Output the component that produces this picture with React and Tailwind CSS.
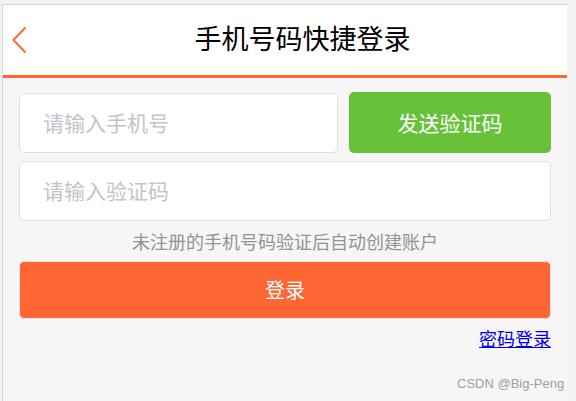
import React from 'react'

const cjk = { fontFamily: '"Noto Sans CJK SC", "Liberation Sans", sans-serif' }

export default function App() {
  return (
    <div className="relative w-[576px] h-[401px] bg-[#f3f3f3] pt-[4px] pl-[2px] overflow-hidden" style={cjk}>
      <div className="w-[565px] h-[397px] border-l border-t border-[#d6d6d6] bg-[#f7f5f6]">
        {/* header */}
        <div className="flex items-center h-[70px] bg-white">
          <div className="w-[35px] h-full flex items-center pl-[9px]">
            <svg width="14" height="26" viewBox="0 0 14 26" fill="none">
              <polyline points="13,1 1.5,13 13,25" stroke="#ff6a3d" strokeWidth="2" strokeLinecap="round" strokeLinejoin="round" />
            </svg>
          </div>
          <h1 className="flex-1 text-center text-[27px] font-normal text-black leading-none" style={{ fontFamily: '"Liberation Serif", "Noto Sans CJK SC", serif' }}>
            手机号码快捷登录
          </h1>
        </div>
        <div className="h-[3px] bg-[#ff6633]" />

        {/* form */}
        <div className="px-[16px] pt-[15px]">
          <div className="flex gap-[11px]">
            <div className="w-[319px] h-[60px] flex items-center pl-[23px] bg-white border border-[#dcdfe6] rounded-[5px] text-[21px] text-[#c0c4cc]">
              请输入手机号
            </div>
            <button className="flex-1 h-[61px] -mt-[1px] flex items-center justify-center bg-[#67c23a] rounded-[5px] text-[21px] text-white">
              发送验证码
            </button>
          </div>
          <div className="mt-[8px] h-[60px] flex items-center pl-[23px] bg-white border border-[#dcdfe6] rounded-[5px] text-[21px] text-[#c0c4cc]">
            请输入验证码
          </div>
          <div className="h-[40px] flex items-center justify-center text-[18px] text-[#909399]">
            未注册的手机号码验证后自动创建账户
          </div>
          <button className="w-full h-[58px] flex items-center justify-center bg-[#ff6633] border border-[#e4e4e4] rounded-[5px] text-[20px] text-white">
            登录
          </button>
          <div className="mt-[6px] flex justify-end">
            <a href="#" className="text-[18px] leading-[26px] text-[#0000ee] underline">密码登录</a>
          </div>
        </div>
      </div>
      <div className="absolute left-[457px] top-[377px] text-[13px] leading-[14px] text-[#a0a0a0]" style={{ fontFamily: '"Liberation Sans", Arial, sans-serif' }}>
        CSDN @Big-Peng
      </div>
    </div>
  )
}
